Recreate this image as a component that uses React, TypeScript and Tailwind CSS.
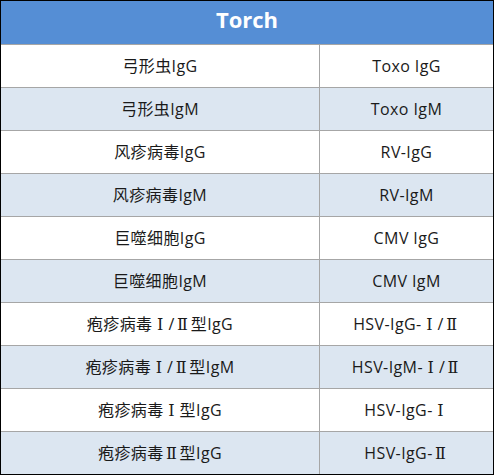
const rows: [string, string][] = [
  ["弓形虫IgG", "Toxo IgG"],
  ["弓形虫IgM", "Toxo IgM"],
  ["风疹病毒IgG", "RV-IgG"],
  ["风疹病毒IgM", "RV-IgM"],
  ["巨噬细胞IgG", "CMV IgG"],
  ["巨噬细胞IgM", "CMV IgM"],
  ["疱疹病毒Ⅰ/Ⅱ型IgG", "HSV-IgG-Ⅰ/Ⅱ"],
  ["疱疹病毒Ⅰ/Ⅱ型IgM", "HSV-IgM-Ⅰ/Ⅱ"],
  ["疱疹病毒Ⅰ型IgG", "HSV-IgG-Ⅰ"],
  ["疱疹病毒Ⅱ型IgG", "HSV-IgG-Ⅱ"],
]

// roman numerals render as full-width serif glyphs in the original
function Label({ text }: { text: string }) {
  return (
    <span>
      {text.split(/([ⅠⅡ])/).map((part, i) =>
        part === "Ⅰ" || part === "Ⅱ" ? (
          <span
            key={i}
            className="inline-block w-[16px] text-center"
            style={{ fontFamily: '"DejaVu Serif", "Liberation Serif", serif' }}
          >
            {part}
          </span>
        ) : (
          part
        )
      )}
    </span>
  )
}

export default function App() {
  return (
    <div className="h-[475px] w-[494px] bg-white">
      <div
        className="w-[494px] border border-black text-[16px] tracking-[0.4px] text-[#1a1a1a]"
        style={{ fontFamily: '"Open Sans", "Noto Sans CJK SC", sans-serif' }}
      >
        <div className="flex h-[43px] items-center justify-center bg-[#558ed5] pb-[6px] text-[22px] font-bold tracking-normal text-white">
          Torch
        </div>
        {rows.map(([cn, en], i) => (
          <div
            key={cn}
            className={`flex h-[43px] border-t border-[#a6a6a6] ${i % 2 === 1 ? "bg-[#dce6f1]" : "bg-white"}`}
          >
            <div className="flex w-[319px] items-center justify-center border-r border-[#a6a6a6]">
              <Label text={cn} />
            </div>
            <div className="flex flex-1 items-center justify-center">
              <Label text={en} />
            </div>
          </div>
        ))}
      </div>
    </div>
  )
}
